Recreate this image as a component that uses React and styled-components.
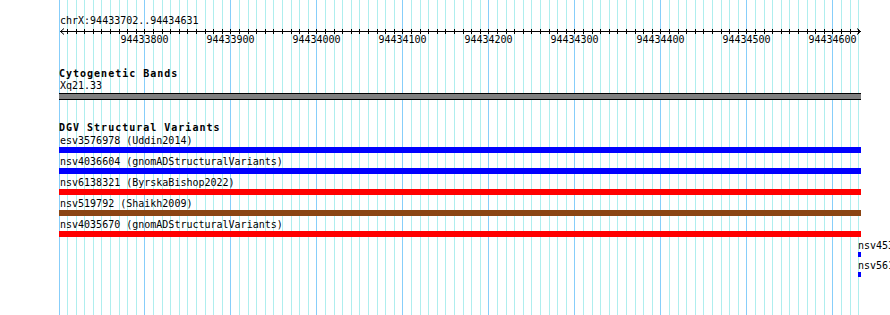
import React from "react";
import styled, { createGlobalStyle } from "styled-components";

const GlobalStyle = createGlobalStyle`
  html, body { margin: 0; padding: 0; background: #ffffff; overflow: hidden; }
  body { font-family: "DejaVu Sans Mono", "Liberation Mono", monospace; font-size: 10px; line-height: 12px; color: #000; }
`;

const VIEW_START = 94433700;
const VIEW_END = 94434630;
const PX_PER_BP = 0.8598;
const ORIGIN_X = 59;
const bpToX = (bp) => Math.floor(ORIGIN_X + (bp - VIEW_START) * PX_PER_BP);

const gridPositions = [];
for (let bp = VIEW_START; bp <= VIEW_END; bp += 10) {
  gridPositions.push({ bp, x: bpToX(bp), major: bp % 100 === 0 });
}

const Page = styled.div`
  position: relative;
  width: 890px;
  height: 315px;
  overflow: hidden;
  background: #ffffff;
`;

const GridLayer = styled.svg`
  position: absolute;
  top: 0;
  left: 0;
  z-index: 0;
`;

const Content = styled.div`
  position: relative;
  z-index: 1;
  display: flex;
  flex-direction: column;
  padding-top: 15px;
`;

const LocationLabel = styled.div`
  padding-left: 60px;
  height: 12px;
  white-space: nowrap;
`;

const RulerSvg = styled.svg`
  display: block;
`;

const Section = styled.section`
  display: flex;
  flex-direction: column;
  margin-top: ${(p) => p.$gap}px;
`;

const SectionTitle = styled.div`
  padding-left: 59px;
  height: 12px;
  font-weight: bold;
  letter-spacing: 1px;
  white-space: nowrap;
`;

const BandLabel = styled.div`
  padding-left: 60px;
  height: 12px;
  white-space: nowrap;
`;

const BandBar = styled.div`
  margin-top: 1px;
  margin-left: 59px;
  width: 802px;
  height: 7px;
  box-sizing: border-box;
  background: #808080;
  border-top: 1px solid #000;
  border-bottom: 1px solid #000;
`;

const FeatureList = styled.div`
  margin-top: 1px;
  display: grid;
  row-gap: 3px;
`;

const Feature = styled.div`
  display: flex;
  flex-direction: column;
  margin-left: ${(p) => p.$left}px;
  width: ${(p) => p.$width}px;
`;

const FeatureLabel = styled.div`
  height: 12px;
  padding-left: ${(p) => p.$offset}px;
  white-space: nowrap;
`;

const FeatureBar = styled.div`
  height: ${(p) => p.$h}px;
  background: ${(p) => p.$color};
`;

const features = [
  { label: "esv3576978 (Uddin2014)", left: 59, width: 802, color: "#0000ff", h: 6, offset: 1 },
  { label: "nsv4036604 (gnomADStructuralVariants)", left: 59, width: 802, color: "#0000ff", h: 6, offset: 1 },
  { label: "nsv6138321 (ByrskaBishop2022)", left: 59, width: 802, color: "#ff0000", h: 6, offset: 1 },
  { label: "nsv519792 (Shaikh2009)", left: 59, width: 802, color: "#8b4513", h: 6, offset: 1 },
  { label: "nsv4035670 (gnomADStructuralVariants)", left: 59, width: 802, color: "#ff0000", h: 6, offset: 1 },
  { label: "nsv4535082 (gnomADStructuralVariants)", left: 858, width: 3, color: "#0000ff", h: 5, offset: 0 },
  { label: "nsv5617734 (gnomADStructuralVariants)", left: 858, width: 3, color: "#0000ff", h: 5, offset: 0 },
];

function GridLines() {
  return (
    <GridLayer width="890" height="315" shapeRendering="crispEdges">
      {gridPositions.map((g) => (
        <rect
          key={g.bp}
          x={g.x}
          y={0}
          width={1}
          height={315}
          fill={g.major ? "#87cefa" : "#afeeee"}
        />
      ))}
    </GridLayer>
  );
}

function Ruler() {
  const ticks = gridPositions.filter((g) => g.bp > VIEW_START);
  const majors = gridPositions.filter((g) => g.major && g.bp > VIEW_START);
  return (
    <RulerSvg width="890" height="20">
      <g shapeRendering="crispEdges">
        <rect x={60} y={4} width={801} height={1} fill="#000" />
        {ticks.map((t) => (
          <rect key={t.bp} x={t.x} y={2} width={1} height={5} fill="#000" />
        ))}
      </g>
      <polyline points="64,1.5 60.5,4.5 64,7.5" fill="none" stroke="#000" strokeWidth="1" />
      <polyline points="857,1.5 860.5,4.5 857,7.5" fill="none" stroke="#000" strokeWidth="1" />
      {majors.map((m) => (
        <text
          key={m.bp}
          x={m.x + 0.5}
          y={16}
          textAnchor="middle"
          fontFamily="'DejaVu Sans Mono', 'Liberation Mono', monospace"
          fontSize="10"
          fill="#000"
        >
          {m.bp}
        </text>
      ))}
    </RulerSvg>
  );
}

export default function App() {
  return (
    <>
      <GlobalStyle />
      <Page>
        <GridLines />
        <Content>
          <LocationLabel>chrX:94433702..94434631</LocationLabel>
          <Ruler />
          <Section $gap={21}>
            <SectionTitle>Cytogenetic Bands</SectionTitle>
            <BandLabel>Xq21.33</BandLabel>
            <BandBar />
          </Section>
          <Section $gap={22}>
            <SectionTitle>DGV Structural Variants</SectionTitle>
            <FeatureList>
              {features.map((f) => (
                <Feature key={f.label} $left={f.left} $width={f.width}>
                  <FeatureLabel $offset={f.offset}>{f.label}</FeatureLabel>
                  <FeatureBar $h={f.h} $color={f.color} />
                </Feature>
              ))}
            </FeatureList>
          </Section>
        </Content>
      </Page>
    </>
  );
}
